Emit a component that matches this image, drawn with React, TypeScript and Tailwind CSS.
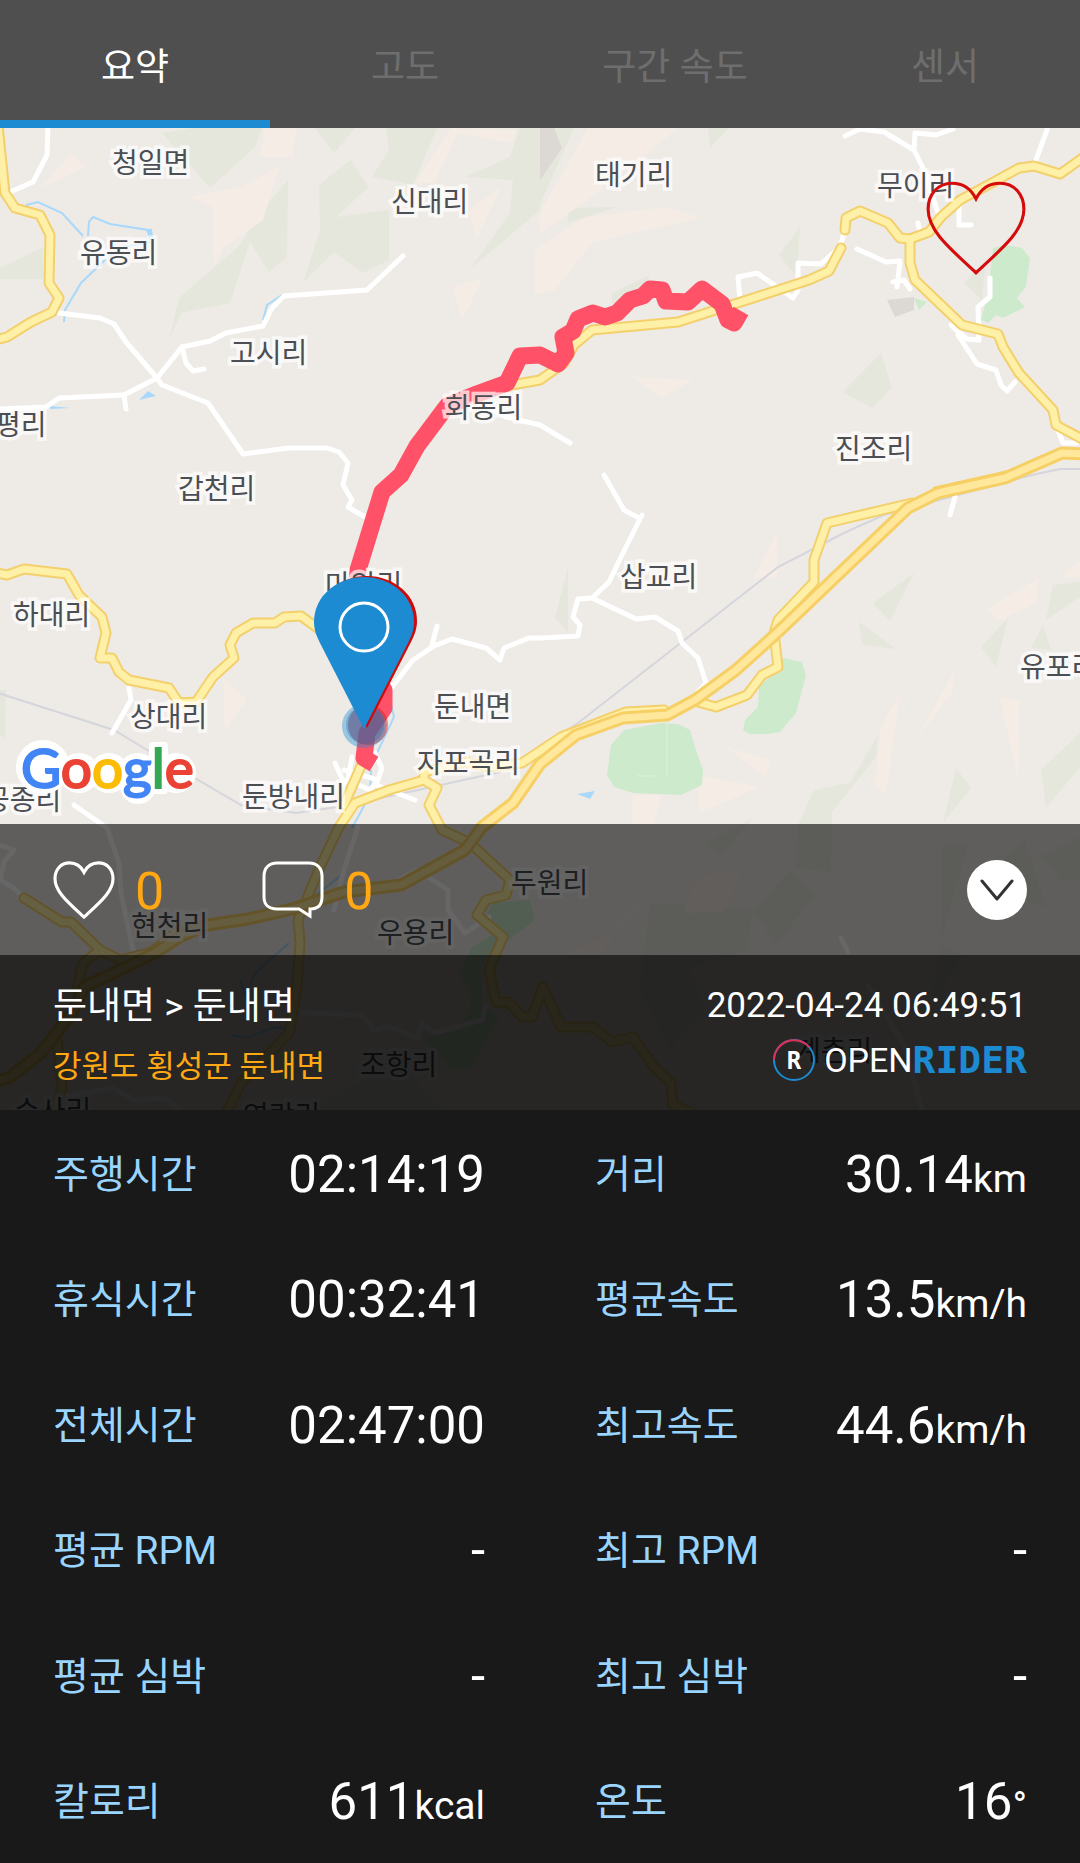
import { useState } from 'react';

interface Stat {
  label: string;
  value: string;
  unit?: string;
}

interface Place {
  name: string;
  x: number;
  y: number;
}

const TABS = ['요약', '고도', '구간 속도', '센서'];

const STATS: Stat[] = [
  { label: '주행시간', value: '02:14:19' },
  { label: '거리', value: '30.14', unit: 'km' },
  { label: '휴식시간', value: '00:32:41' },
  { label: '평균속도', value: '13.5', unit: 'km/h' },
  { label: '전체시간', value: '02:47:00' },
  { label: '최고속도', value: '44.6', unit: 'km/h' },
  { label: '평균 RPM', value: '-' },
  { label: '최고 RPM', value: '-' },
  { label: '평균 심박', value: '-' },
  { label: '최고 심박', value: '-' },
  { label: '칼로리', value: '611', unit: 'kcal' },
  { label: '온도', value: '16', unit: '°' },
];

const PLACES: Place[] = [
  { name: '청일면', x: 112, y: 173 },
  { name: '신대리', x: 391, y: 212 },
  { name: '유동리', x: 80, y: 263 },
  { name: '고시리', x: 230, y: 363 },
  { name: '태기리', x: 595, y: 185 },
  { name: '무이리', x: 877, y: 196 },
  { name: '화동리', x: 445, y: 418 },
  { name: '평리', x: -5, y: 435 },
  { name: '갑천리', x: 178, y: 499 },
  { name: '진조리', x: 835, y: 459 },
  { name: '삽교리', x: 620, y: 587 },
  { name: '하대리', x: 13, y: 625 },
  { name: '상대리', x: 130, y: 727 },
  { name: '둔내면', x: 434, y: 717 },
  { name: '자포곡리', x: 417, y: 773 },
  { name: '둔방내리', x: 242, y: 807 },
  { name: '공종리', x: -16, y: 810 },
  { name: '유포리', x: 1020, y: 677 },
  { name: '마암리', x: 325, y: 595 },
  { name: '현천리', x: 131, y: 936 },
  { name: '두원리', x: 511, y: 893 },
  { name: '우용리', x: 377, y: 943 },
  { name: '조항리', x: 360, y: 1075 },
  { name: '수사리', x: 14, y: 1121 },
  { name: '영랑리', x: 243, y: 1126 },
  { name: '계촌리', x: 795, y: 1061 },
];

const WOODS = [
  '162,133 193,128 262,128 255,147 210,188',
  '315,128 355,128 334,153',
  '386,128 437,128 413,185 372,177 389,150',
  '319,185 351,160 368,187 336,217 389,210 389,260 363,273 334,252 303,283 320,230',
  '288,180 287,257 269,272 250,242 230,303 181,313 169,340 179,298 238,247 265,207',
  '465,177 510,157 520,128 574,128 540,205 540,210 470,269 510,213 513,180',
  '0,268 43,247 43,279 0,279',
  '568,208 616,207 568,223',
  '612,293 650,275 640,300 612,304',
  '708,128 729,128 710,148',
  '800,227 797,277 779,255',
  '881,353 892,388 872,408 843,392',
  '986,260 982,300 964,283',
  '914,573 890,621 873,603',
  '859,622 896,649 862,645',
  '1008,618 996,667 981,647',
  '1053,585 1080,582 1080,597 1046,620',
  '1043,625 1051,650 1031,648',
  '1080,733 1041,770 1046,808 1080,767',
  '956,768 971,788 943,823',
  '878,735 876,757 832,812 831,872 795,868 798,825 814,790 850,783',
  '568,567 568,633 555,618',
  '0,690 6,690 5,740 0,735',
  '707,843 753,818 721,855',
  '791,870 815,895 776,945 753,910',
  '941,847 969,842 941,940',
  '1024,837 1046,907 1012,900 998,867',
  '650,903 753,910 747,950 690,968 705,1010 670,1050 640,990',
  '941,945 963,955 930,1010',
  '1042,856 1080,837 1080,880 1060,880',
  '310,1110 400,1060 440,1110',
];

const SLOPES = [
  '265,128 296,128 293,157 260,157',
  '188,197 241,187 279,167 263,220 224,247 214,265 213,207',
  '451,128 517,130 511,143 458,133 434,183 415,183',
  '71,153 86,167 41,188',
  '501,187 477,238 468,210',
  '453,287 483,278 462,320',
  '588,128 678,128 602,190 540,233 540,213',
  '535,250 585,217 667,207 700,218 593,242 555,290 535,294',
  '633,377 692,380 661,398',
  '777,533 777,578 753,578',
  '988,608 1039,578 1036,603 998,621',
  '1000,698 1019,700 1018,778',
  '900,693 886,793 875,788 881,727',
  '954,670 952,693 917,739',
  '726,747 771,760 765,777',
  '697,775 760,787 700,812',
  '633,795 661,795 654,824 632,824',
  '223,678 247,700 225,730',
  '681,850 631,917 599,955 564,955 612,933',
  '743,868 724,912 683,913 698,878',
  '1080,560 1062,577 1080,577',
];

const PARKS = [
  '993,248 1005,245 1022,248 1030,258 1026,287 1017,298 1025,307 1003,318 996,315 988,323 981,320 988,293',
  '914,298 927,302 919,310',
  '784,658 802,662 806,675 796,713 780,732 767,734 750,734 743,730 745,720 758,707 759,687 771,675',
  '624,730 661,723 678,724 690,730 695,747 703,770 702,785 681,795 633,793 614,787 607,775 611,745',
  '492,903 530,900 535,920 506,942 482,967 482,1007 499,1017 472,1067 451,1070 424,1038 461,1027 472,1000 460,973 472,947 496,933 486,917',
];

const STREAMS = [
  '26,205 38,202 62,213 83,236',
  '88,236 89,222 93,217 110,224 148,230 150,240',
  '150,242 124,247 107,258 81,283 65,310 64,322',
  '263,320 267,305 282,295',
  '386,683 394,717 377,753',
  '371,770 370,795 352,828',
  '339,877 310,900',
  '289,943 255,973 246,997 240,980',
  '232,1035 246,1038 275,1027 289,1030',
];

const LANES = [
  '48,126 47,155 33,182 10,192',
  '59,313 100,318 114,324 126,342 157,378 182,347 210,341 226,333 263,326 272,308 284,296 367,290 403,256',
  '182,347 186,363 193,371 204,369',
  '-2,409 46,407 59,398 124,395 157,378 162,385 208,403 243,454 289,448 327,448 339,452 348,463 343,485 352,500 348,507 367,518',
  '124,395 126,409',
  '385,700 392,687 413,660 434,646 452,639 486,648 500,660 504,648 529,638 540,638 578,636 580,625 573,617 578,599 592,598 609,582 621,557 642,515',
  '437,626 432,645',
  '639,518 624,510 604,475',
  '592,598 636,619 655,617 678,631 682,643 698,658 706,683 697,693',
  '490,408 506,417 540,425 570,443',
  '845,136 860,129 884,132 914,150 924,170 938,213',
  '914,150 915,133 936,135 953,129',
  '1048,127 1036,160',
  '959,203 959,225 971,225',
  '857,249 886,262 900,261 897,287',
  '893,282 904,280 910,289',
  '918,223 920,233',
  '845,230 840,247 821,264 798,263 798,290 793,298 757,273 738,277 740,300',
  '990,278 990,297 978,307 979,340 967,339 951,325',
  '958,335 977,364 996,370 1001,385 1007,391 1015,382',
  '955,497 950,515',
  '1058,430 1063,443 1077,443',
  '129,688 131,700 112,733',
  '74,805 107,828 119,863 121,893 133,950',
  '335,763 344,783 375,753 382,768 376,785 415,800',
  '344,770 378,780 370,790 348,780 352,757',
  '358,827 344,870 334,910',
  '399,880 417,870 448,890 448,910 465,933 489,917',
  '303,1013 362,1015 374,1030 389,1027 418,1038 422,1023 434,1033 482,1020 485,1007',
  '841,938 848,952',
  '868,985 905,1047 922,1110',
  '0,845 14,850 4,862 0,880 14,888 24,898',
  '62,1097 112,1088 135,1100 165,1098 180,1110',
];

const ROADS = [
  '-2,125 5,193 15,208 40,215 50,235 49,283 59,298 52,312 31,322 7,337 -5,340',
  '-3,573 7,575 24,569 67,574 79,595 102,617 106,633 100,658 112,658 119,672 129,680 169,688 179,703 196,702 213,677 234,658 230,645 236,633 253,623 275,623 284,617 301,616 320,630',
  '506,386 540,380 564,363 574,345 592,330 678,322 747,300 809,280 829,271 841,248',
  '845,230 846,218 860,211 888,223 900,238 910,239 929,232 941,217 960,200 988,185 1019,168 1034,166 1060,174 1084,157',
  '910,239 910,263 915,280 962,325 998,334 1003,347 1019,373 1053,410 1056,425 1084,440',
  '912,503 827,523 814,560 814,582 778,620 774,633 778,667 762,675 747,695 716,707 698,702',
  '664,710 626,712 561,737 522,763 489,767 465,762 424,772 424,780 389,790 355,803 339,827 320,867 298,920 300,943 297,987 289,1033 241,1083 227,1112',
  '365,757 344,805',
  '424,780 437,788 429,805 442,830 470,843 510,880 506,895 486,900 477,915 503,937 489,970 496,1002 510,1003 522,1017 532,1017 543,987 561,1027 593,1027 612,1042 633,1037 654,1067 671,1083 673,1105 690,1112',
  '24,898 62,922 71,922 100,950 120,960 152,952 179,930',
  '100,950 83,963 77,990',
  '57,1040 62,1087 55,1110',
];

const HIGHWAY =
  '1084,454 1062,453 1005,478 938,493 908,508 778,632 736,670 695,700 667,715 623,718 576,735 540,764 513,803 482,827 465,850 401,885 344,892 296,908 248,919 207,925 179,937 155,953 120,970 84,987 72,1013 41,1053 10,1077 -4,1082';

const RAILWAY =
  '-2,693 114,730 152,753 241,805 296,813 344,806 441,785 500,772 578,723 778,567 846,532 884,515 1032,475 1060,469 1082,469';

const TRACK =
  '741,311 734,323 728,320 722,304 702,289 688,302 666,301 662,290 650,289 643,296 630,300 617,313 605,317 593,313 578,319 573,331 563,337 566,353 558,364 540,355 520,356 507,383 477,394 447,406 417,446 401,475 382,492 358,570 350,640 384,690 384,708 367,733 364,758 374,764';

const HEART = 'M49 18C44 8 36 3 26 3C12 3 3 14 3 28C3 48 22 64 49 89C76 64 95 48 95 28C95 14 86 3 72 3C62 3 54 8 49 18Z';

const PIN = 'M364 729L320 643C316 635 314 629 314 622C314 596 337 577 364 577C391 577 414 596 414 622C414 629 412 635 408 643Z';

function HeartIcon({ className, strokeWidth }: { className: string; strokeWidth: number }) {
  return (
    <svg viewBox="0 0 98 92" fill="none" stroke="currentColor" strokeWidth={strokeWidth} className={className}>
      <path d={HEART} />
    </svg>
  );
}

function CommentIcon() {
  return (
    <svg viewBox="0 0 62 58" fill="none" stroke="currentColor" strokeWidth="3" className="h-[58px] w-[62px]">
      <path d="M15 2H47C55 2 60 7 60 15V36C60 44 56 48 48 48V55L37 48H15C7 48 2 44 2 36V15C2 7 7 2 15 2Z" />
    </svg>
  );
}

function RideMap() {
  return (
    <svg
      viewBox="0 128 1080 982"
      preserveAspectRatio="xMidYMin slice"
      role="img"
      aria-label="주행 경로 지도"
      className="absolute inset-0 h-full w-full bg-[#eeebe6]"
    >
      <g fill="#e5e6dc">
        {WOODS.map((p) => (
          <polygon key={p} points={p} />
        ))}
      </g>
      <g fill="#f5ece5">
        {SLOPES.map((p) => (
          <polygon key={p} points={p} />
        ))}
      </g>
      <g fill="#dcd9d4">
        <polygon points="540,128 554,128 562,148 540,180" />
        <polygon points="887,300 914,297 914,310 895,317" />
      </g>
      <g fill="#cdeacd">
        {PARKS.map((p) => (
          <polygon key={p} points={p} />
        ))}
      </g>
      <path d="M667 724V776M637 776H655" stroke="#e0f0dc" strokeWidth="1" />
      <g fill="#a9d8fb">
        <polygon points="148,391 156,396 139,400" />
        <polygon points="577,794 595,791 590,799" />
        <polygon points="145,229 152,229 153,238 149,236" />
        <polygon points="50,406 70,408 50,409" />
      </g>
      <g fill="none" stroke="#a9d8fb" strokeWidth="2">
        {STREAMS.map((p) => (
          <polyline key={p} points={p} />
        ))}
      </g>
      <polyline points={RAILWAY} fill="none" stroke="#d5d6dc" strokeWidth="2" />

      <g fill="none" strokeLinecap="round" strokeLinejoin="round">
        <g stroke="#ffffff" strokeWidth="5">
          {LANES.map((p) => (
            <polyline key={p} points={p} />
          ))}
        </g>
        <g stroke="#f3d06c" strokeWidth="11">
          {ROADS.map((p) => (
            <polyline key={p} points={p} />
          ))}
        </g>
        <g stroke="#fff0a8" strokeWidth="7">
          {ROADS.map((p) => (
            <polyline key={p} points={p} />
          ))}
        </g>
        <polyline points="1015,471 935,489" stroke="#f6cf65" strokeWidth="5" />
        <polyline points={HIGHWAY} stroke="#f6cf65" strokeWidth="13" />
        <polyline points={HIGHWAY} stroke="#ffe89c" strokeWidth="7" />
      </g>
      <polyline points={TRACK} fill="none" stroke="#ff5268" strokeWidth="17" strokeLinejoin="round" />

      <g
        className="font-['Noto_Sans_CJK_KR',sans-serif] text-[28px]"
        fill="#4b4f54"
        stroke="#ffffff"
        strokeOpacity="0.7"
        strokeWidth="7"
        paintOrder="stroke"
      >
        {PLACES.map((place) => (
          <text key={place.name} x={place.x} y={place.y}>
            {place.name}
          </text>
        ))}
      </g>

      {/* end marker sits just behind the start marker */}
      <circle cx="368" cy="725" r="20" fill="#e01b1b" fillOpacity="0.5" />
      <circle cx="364" cy="726" r="22" fill="#1c8bd2" fillOpacity="0.4" />
      <circle cx="365" cy="725" r="19" fill="#1c6bb2" fillOpacity="0.3" />
      <path d={PIN} transform="translate(3 -1)" fill="#cc0c0c" />
      <path d={PIN} fill="#1c8bd2" />
      <circle cx="364" cy="627" r="24" fill="none" stroke="#ffffff" strokeWidth="3" />

      {/* white backing of the attribution */}
      <g fill="#ffffff">
        <circle cx="43" cy="767" r="27" />
        <circle cx="79" cy="773" r="20" />
        <circle cx="109" cy="773" r="20" />
        <circle cx="138" cy="773" r="20" />
        <circle cx="138" cy="786" r="18" />
        <rect x="149" y="742" width="19" height="52" rx="4" />
        <circle cx="176" cy="773" r="20" />
      </g>
      <text x="21" y="788" strokeWidth="2" className="font-['Lato',sans-serif] text-[55px]">
        <tspan fill="#4285f4" stroke="#4285f4">G</tspan>
        <tspan fill="#ea4335" stroke="#ea4335">o</tspan>
        <tspan fill="#fbbc05" stroke="#fbbc05">o</tspan>
        <tspan fill="#4285f4" stroke="#4285f4">g</tspan>
        <tspan fill="#34a853" stroke="#34a853">l</tspan>
        <tspan fill="#ea4335" stroke="#ea4335">e</tspan>
      </text>
    </svg>
  );
}

function BrandLogo() {
  return (
    <div className="flex h-[50px] items-center">
      <svg viewBox="0 0 44 44" fill="none" strokeWidth="2" className="mr-2 h-11 w-11">
        <circle cx="22" cy="22" r="20" stroke="#1c8bd2" />
        <path d="M2 22A20 20 0 0 1 37 9" stroke="#dc2f55" />
        <text
          x="22"
          y="31"
          textAnchor="middle"
          fill="#ffffff"
          className="font-['DejaVu_Sans_Mono',monospace] text-[24px] font-bold"
        >
          R
        </text>
      </svg>
      <span className="font-['Roboto',sans-serif] text-[34px] leading-none">OPEN</span>
      <span className="font-['DejaVu_Sans_Mono',monospace] text-[38px] leading-none font-bold text-[#1c8bd2]">
        RIDER
      </span>
    </div>
  );
}

export default function App() {
  const [tab, setTab] = useState(TABS[0]);
  const [liked, setLiked] = useState(false);

  return (
    <div className="flex min-h-screen flex-col bg-[#191919] font-['Roboto','Noto_Sans_CJK_KR',sans-serif] text-white">
      <nav role="tablist" className="grid h-32 grid-cols-4 bg-[#4f4f4f]">
        {TABS.map((name) => (
          <button
            key={name}
            type="button"
            role="tab"
            aria-selected={tab === name}
            onClick={() => setTab(name)}
            className={`border-b-8 pt-3.5 text-[37px] leading-none ${
              tab === name ? 'border-[#1c8bd2] text-white' : 'border-transparent text-[#6e6e6e]'
            }`}
          >
            {name}
          </button>
        ))}
      </nav>

      <section className="relative flex aspect-[540/491] w-full flex-col justify-end">
        <RideMap />
        <button
          type="button"
          aria-label="즐겨찾기"
          aria-pressed={liked}
          onClick={() => setLiked(!liked)}
          className="absolute top-[52px] right-[53px] text-[#d40c0c]"
        >
          <HeartIcon className="h-24 w-[102px]" strokeWidth={3} />
        </button>

        <div className="relative flex h-[131px] items-center bg-black/60 px-[53px]">
          <button type="button" aria-label="좋아요" className="mr-[98px] flex items-center gap-5">
            <HeartIcon className="h-[58px] w-[62px]" strokeWidth={5} />
            <span className="pt-1 text-[52px] leading-none text-[#ffa814]">0</span>
          </button>
          <button type="button" aria-label="댓글" className="flex items-center gap-5">
            <CommentIcon />
            <span className="pt-1 text-[52px] leading-none text-[#ffa814]">0</span>
          </button>
          <button
            type="button"
            aria-label="접기"
            className="ml-auto flex h-[60px] w-[60px] items-center justify-center rounded-full bg-white text-[#333333]"
          >
            <svg
              viewBox="0 0 34 22"
              fill="none"
              stroke="currentColor"
              strokeWidth="3"
              strokeLinecap="round"
              strokeLinejoin="round"
              className="h-[22px] w-[34px]"
            >
              <path d="M2 2L17 20L32 2" />
            </svg>
          </button>
        </div>

        <div className="relative flex h-[155px] justify-between bg-black/84 px-[53px] pt-[22px]">
          <div>
            <h1 className="text-[37px] leading-[60px]">둔내면 &gt; 둔내면</h1>
            <p className="text-[31px] leading-[60px] text-[#ffa814]">강원도 횡성군 둔내면</p>
          </div>
          <div className="flex flex-col items-end">
            <time dateTime="2022-04-24T06:49:51" className="text-[35px] leading-[58px]">
              2022-04-24 06:49:51
            </time>
            <BrandLogo />
          </div>
        </div>
      </section>

      <dl className="grid flex-1 auto-rows-fr grid-cols-2 gap-x-[110px] px-[53px]">
        {STATS.map((stat) => (
          <div key={stat.label} className="flex items-center justify-between pt-1">
            <dt className="text-[39px] leading-[60px] text-[#99d5ff]">{stat.label}</dt>
            <dd className="text-[51px] leading-[60px]">
              {stat.value}
              {stat.unit && <span className="text-[39px] leading-none">{stat.unit}</span>}
            </dd>
          </div>
        ))}
      </dl>
    </div>
  );
}
